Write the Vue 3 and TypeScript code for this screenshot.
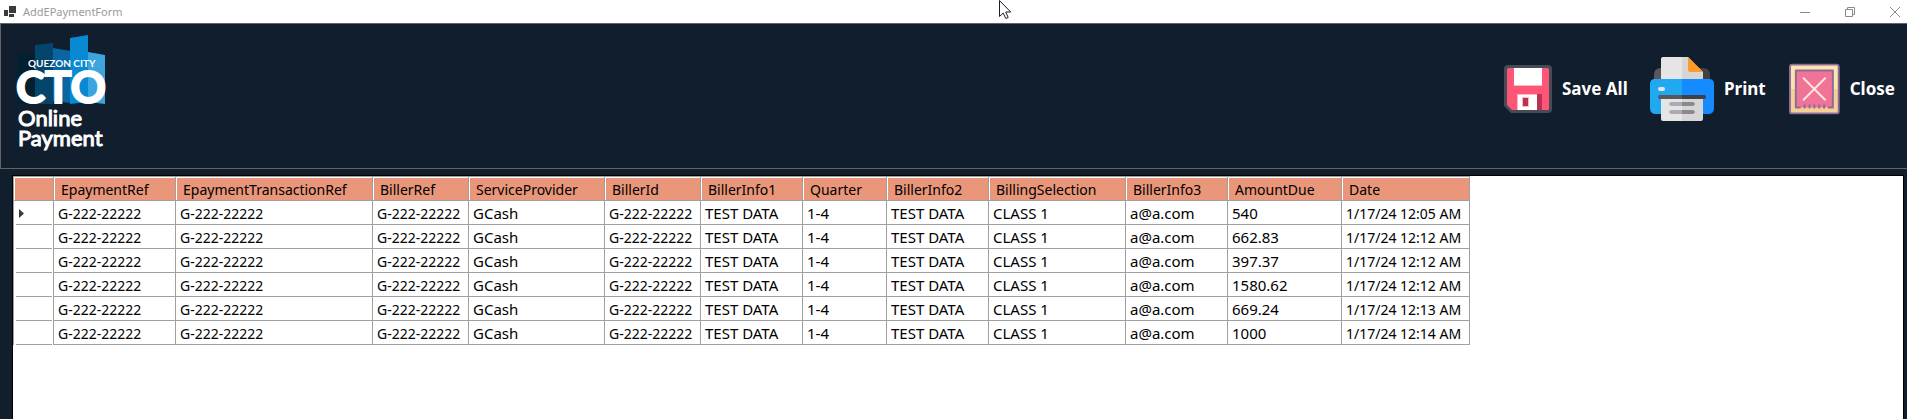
<script setup lang="ts">
interface Column {
  key: string
  width: number
  compact?: boolean
}

const columns: Column[] = [
  { key: 'EpaymentRef', width: 122, compact: true },
  { key: 'EpaymentTransactionRef', width: 197, compact: true },
  { key: 'BillerRef', width: 96, compact: true },
  { key: 'ServiceProvider', width: 136 },
  { key: 'BillerId', width: 96, compact: true },
  { key: 'BillerInfo1', width: 102 },
  { key: 'Quarter', width: 84 },
  { key: 'BillerInfo2', width: 102 },
  { key: 'BillingSelection', width: 137 },
  { key: 'BillerInfo3', width: 102 },
  { key: 'AmountDue', width: 114 },
  { key: 'Date', width: 128, compact: true },
]

const payments: [string, string][] = [
  ['540', '1/17/24 12:05 AM'],
  ['662.83', '1/17/24 12:12 AM'],
  ['397.37', '1/17/24 12:12 AM'],
  ['1580.62', '1/17/24 12:12 AM'],
  ['669.24', '1/17/24 12:13 AM'],
  ['1000', '1/17/24 12:14 AM'],
]

const reference = 'G-222-22222'
const rows: string[][] = payments.map(([amount, date]) => [
  reference, reference, reference, 'GCash', reference, 'TEST DATA',
  '1-4', 'TEST DATA', 'CLASS 1', 'a@a.com', amount, date,
])
</script>

<template>
  <div class="window">
    <header class="titlebar">
      <svg class="app-icon" width="12" height="12" viewBox="0 0 12 12" aria-hidden="true">
        <path d="M5 0h7v7H5zM0 4h4v6H0zM5 8h5v3H5z" fill="#3b3b3b" />
      </svg>
      <span class="title">AddEPaymentForm</span>
      <div class="controls">
        <button type="button" aria-label="Minimize">
          <svg width="10" height="10" viewBox="0 0 10 10"><path d="M0 5.5h10" stroke="#8a8a8a" /></svg>
        </button>
        <button type="button" aria-label="Restore">
          <svg width="10" height="10" viewBox="0 0 10 10" fill="none" stroke="#8a8a8a"><path d="M.5 2.500h7v7h-7zM2.500 2.500v-2h7v7h-2" /></svg>
        </button>
        <button type="button" aria-label="Close window">
          <svg width="10" height="10" viewBox="0 0 10 10"><path d="M0 0l10 10M10 0L0 10" stroke="#8a8a8a" /></svg>
        </button>
      </div>
      <svg class="pointer" width="13" height="20" viewBox="0 0 13 20" aria-hidden="true">
        <path d="M.5.5v16l3.700-3.500 2.600 5.500 2.400-1-2.500-5.500h5z" fill="#fff" stroke="#1c1c2c" />
      </svg>
    </header>

    <section class="banner">
      <svg class="logo" width="92" height="120" viewBox="0 0 92 120" role="img" aria-label="Quezon City CTO Online Payment">
        <path d="M1 17l18 2v50H1z" fill="#02202f" />
        <path d="M19 10l18-2v61H19z" fill="#04456b" />
        <path d="M37 13l18 3v52l-18-2z" fill="#0867a3" />
        <path d="M54 3l18-3v67l-18 2z" fill="#0789d4" />
        <path d="M72 17l17 3v49l-17-2z" fill="#3ea4de" />
        <text x="12" y="32" class="logo-city">QUEZON CITY</text>
        <text x="0" y="68" class="logo-cto">CTO</text>
        <text x="2" y="91" class="logo-sub">Online</text>
        <text x="2" y="111" class="logo-sub">Payment</text>
      </svg>

      <nav class="actions" aria-label="Form actions">
        <button type="button" class="action save">
          <svg width="48" height="48" viewBox="0 0 48 48" aria-hidden="true">
            <path d="M4 0h40q4 0 4 4v40q0 4-4 4H7l-7-7V4q0-4 4-4z" fill="#464c56" />
            <path d="M4 3h40l1 1v40l-1 1H8l-5-5V4z" fill="#ff5576" />
            <path d="M10 3h28v18H10z" fill="#ffb5c2" />
            <path d="M10 3h28v17H10zM14 30h19v15H14z" fill="#fff" />
            <path d="M13 29h20v1H14v15h-1zM18 32h7v10h-7z" fill="#ffb5c2" />
            <path d="M33 29h5v16h-5zM19 33h5v8h-5z" fill="#b83252" />
          </svg>
          <span>Save All</span>
        </button>
        <button type="button" class="action print">
          <svg width="64" height="64" viewBox="0 0 64 64" aria-hidden="true">
            <path d="M4 25v-7q0-7 7-7h21v14z" fill="#59565e" />
            <path d="M32 11h21q7 0 7 7v7H32z" fill="#423f47" />
            <path d="M13 0h19v26H11V2q0-2 2-2z" fill="#e5e5e5" />
            <path d="M32 0h6l15 15v11H32z" fill="#d6d6d6" />
            <path d="M38 0l15 15H40q-2 0-2-2z" fill="#ff9b26" />
            <path d="M5 22h27v35H6q-6 0-6-6V27q0-5 5-5z" fill="#20a9f1" />
            <path d="M32 22h27q5 0 5 5v24q0 6-6 6H32z" fill="#168aff" />
            <path d="M11 40h21v24H13q-2 0-2-2z" fill="#e5e5e5" />
            <path d="M32 40h21v22q0 2-2 2H32z" fill="#d6d6d6" />
            <rect x="8" y="30" width="7" height="4" rx="2" fill="#dfe3fb" />
            <path d="M9 38h23v4H9q-2-2 0-4z" fill="#59565e" />
            <path d="M32 38h23q2 2 0 4H32z" fill="#423f47" />
            <path d="M21 45h11v4H21q-4-2 0-4zM21 53h11v4H21q-4-2 0-4z" fill="#acaab4" />
            <path d="M32 45h11q4 2 0 4H32zM32 53h11q4 2 0 4H32z" fill="#8b8892" />
          </svg>
          <span>Print</span>
        </button>
        <button type="button" class="action close">
          <svg width="52" height="52" viewBox="0 0 52 52" aria-hidden="true">
            <rect x="1" y="1" width="50" height="50" rx="2" fill="#fbe5ad" />
            <path d="M2 26h48v24H2z" fill="#f4d192" />
            <rect x="1" y="1" width="50" height="50" rx="2" fill="none" stroke="#8d6b9b" stroke-width="2" />
            <path d="M7 7h38v38H7z" fill="#ef7498" />
            <path d="M12 45H7V7h38v38h-5" fill="none" stroke="#8d6b9b" stroke-width="2" stroke-linejoin="round" />
            <path d="M16 42v4M21 42v4M26 42v4M31 42v4M36 42v4" stroke="#8d6b9b" stroke-width="2" />
            <path d="M15 15l22 22M37 15L15 37" stroke="#ffe7d9" stroke-width="2" stroke-linecap="round" />
          </svg>
          <span>Close</span>
        </button>
      </nav>
    </section>

    <main class="grid-panel">
      <table>
        <colgroup>
          <col class="selector-col" />
          <col v-for="column in columns" :key="column.key" :style="{ width: column.width + 'px' }" />
        </colgroup>
        <thead>
          <tr>
            <td class="corner"></td>
            <th v-for="column in columns" :key="column.key" scope="col">{{ column.key }}</th>
          </tr>
        </thead>
        <tbody>
          <tr v-for="(row, index) in rows" :key="index">
            <td class="selector">
              <svg v-if="index === 0" width="5" height="9" viewBox="0 0 5 9" aria-label="Current row">
                <path d="M0 0l5 4.500L0 9z" fill="#3b3b3b" />
              </svg>
            </td>
            <td v-for="(value, cell) in row" :key="cell" :class="{ compact: columns[cell].compact }">{{ value }}</td>
          </tr>
        </tbody>
      </table>
    </main>
  </div>
</template>

<style>
body {
  margin: 0;
  background: #111e2e;
}
</style>

<style scoped>
.window {
  display: flex;
  flex-direction: column;
  box-sizing: border-box;
  min-height: 100vh;
  background: #111e2e;
  font-family: "Noto Sans", "Open Sans", sans-serif;
}

.titlebar {
  position: relative;
  display: flex;
  align-items: center;
  height: 23px;
  padding-left: 4px;
  background: #fff;
}

.title {
  margin-left: 7px;
  color: #999;
  font-size: 11px;
  line-height: 24px;
}

.controls {
  display: flex;
  align-items: center;
  gap: 35px;
  margin-left: auto;
  padding-right: 7px;
}

.controls button {
  display: flex;
  padding: 0;
  border: 0;
  background: none;
}

.pointer {
  position: absolute;
  top: 0;
  left: 999px;
}

.banner {
  display: flex;
  justify-content: space-between;
  align-items: flex-start;
  box-sizing: border-box;
  height: 146px;
  padding: 11px 12px 0 15px;
  border: 1px solid #646464;
  border-right: 0;
}

.logo {
  overflow: visible;
}

.logo text {
  fill: #fff;
  font-family: Lato, sans-serif;
}

.logo .logo-city {
  font-size: 10px;
  font-weight: 700;
}

.logo .logo-cto {
  font-size: 44px;
  font-weight: 700;
  stroke: #fff;
  stroke-width: 2px;
}

.logo .logo-sub {
  font-size: 22px;
  font-weight: 400;
  stroke: #fff;
  stroke-width: 1px;
}

.actions {
  display: flex;
  margin-top: 22px;
}

.action {
  display: flex;
  align-items: center;
  gap: 10px;
  height: 64px;
  padding: 0;
  border: 0;
  background: none;
  color: #fff;
  font: 700 17px/20px "Noto Sans", "Open Sans", sans-serif;
  white-space: nowrap;
}

.save {
  width: 146px;
}

.print {
  width: 139px;
}

.close {
  width: 106px;
}

.grid-panel {
  flex: 1;
  margin: 6px 3px 0 12px;
  border: 1px solid #000;
  border-bottom: 0;
  background: #fff;
}

table {
  width: 1457px;
  table-layout: fixed;
  border-spacing: 0;
  border-left: 1px solid #a0a0a0;
}

.selector-col {
  width: 40px;
}

th,
td {
  box-sizing: border-box;
  height: 24px;
  padding: 2px 0 0 4px;
  border-right: 1px solid #a0a0a0;
  border-bottom: 1px solid #a0a0a0;
  color: #000;
  font-size: 15px;
  font-weight: 400;
  line-height: 21px;
  text-align: left;
  white-space: nowrap;
}

.compact {
  font-size: 14px;
}

thead th,
thead .corner {
  height: 25px;
  padding-left: 7px;
  border-top: 1px solid #a0a0a0;
  background: #e9967a;
  box-shadow: inset 1px 1px #fff;
  font-size: 14px;
}

tbody .selector {
  padding: 0 0 0 5px;
  border-bottom: 0;
  background: linear-gradient(#a0a0a0, #a0a0a0) 2px 100% / 36px 1px no-repeat;
}

.selector svg {
  display: block;
}
</style>
